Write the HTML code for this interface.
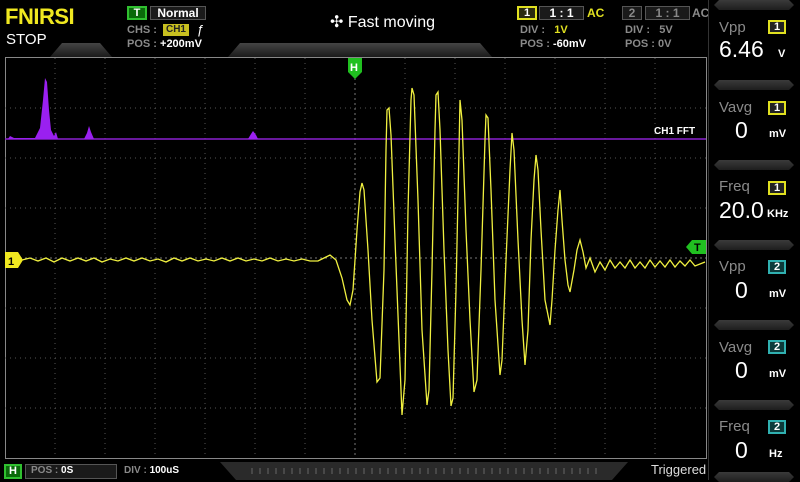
<!DOCTYPE html>
<html><head><meta charset="utf-8"><style>
*{margin:0;padding:0;box-sizing:border-box}
body{width:800px;height:480px;background:#000;overflow:hidden;position:relative;font-family:"Liberation Sans",sans-serif;color:#fff}
.a{position:absolute;white-space:nowrap}
.g{color:#8a8a8a}
.box{position:absolute;border:1px solid #555;background:#1a1a1a;color:#fff;font-weight:bold;font-size:12px;text-align:center;line-height:12px}
.tab{position:absolute;left:714px;width:80px;height:10px;background:linear-gradient(#3a3a3a,#1e1e1e);clip-path:polygon(5px 0,75px 0,80px 5px,75px 10px,5px 10px,0 5px)}
.lbl{position:absolute;left:719px;font-size:15px;color:#8a8a8a}
.val{position:absolute;font-size:23px;color:#fff}
.unit{position:absolute;font-size:11px;font-weight:bold;color:#fff}
.c1{position:absolute;left:768px;width:18px;height:14px;border:2px solid #e0e020;background:#222;color:#fff;font-size:11px;font-weight:bold;text-align:center;line-height:11px}
.c2{position:absolute;left:768px;width:18px;height:14px;border:2px solid #30b0b0;background:#0d3a3a;color:#fff;font-size:11px;font-weight:bold;text-align:center;line-height:11px}
</style></head><body>
<div class="a" style="left:5px;top:4px;font-size:22px;font-weight:bold;color:#f0e820;letter-spacing:-0.5px">FNIRSI</div>
<div class="a" style="left:6px;top:31px;font-size:15px">STOP</div>
<div class="a" style="left:127px;top:6px;width:20px;height:14px;background:#0a6a0a;border:2px solid #30c030;font-size:11px;font-weight:bold;text-align:center;line-height:10px">T</div>
<div class="box" style="left:150px;top:6px;width:56px;height:14px">Normal</div>
<div class="a g" style="left:127px;top:24px;font-size:11px;font-weight:bold">CHS :</div>
<div class="a" style="left:163px;top:24px;width:26px;height:12px;background:#c8c020;color:#222;font-size:10px;font-weight:bold;text-align:center;line-height:12px">CH1</div>
<div class="a" style="left:197px;top:22px;font-size:13px">ƒ</div>
<div class="a g" style="left:127px;top:38px;font-size:11px;font-weight:bold">POS : <span style="color:#fff">+200mV</span></div>
<div class="a" style="left:330px;top:12px;font-size:16px">✣ Fast moving</div>
<div class="a" style="left:517px;top:6px;width:20px;height:14px;border:2px solid #e0e020;background:#2a2a10;font-size:11px;font-weight:bold;text-align:center;line-height:10px">1</div>
<div class="box" style="left:539px;top:6px;width:45px;height:14px">1 : 1</div>
<div class="a" style="left:587px;top:6px;font-size:12px;font-weight:bold;color:#e0e020">AC</div>
<div class="a g" style="left:520px;top:24px;font-size:11px;font-weight:bold">DIV :&nbsp;&nbsp; <span style="color:#e0e020">1V</span></div>
<div class="a g" style="left:520px;top:38px;font-size:11px;font-weight:bold">POS : <span style="color:#fff">-60mV</span></div>
<div class="box" style="left:622px;top:6px;width:20px;height:14px;color:#888">2</div>
<div class="box" style="left:645px;top:6px;width:45px;height:14px;color:#888">1 : 1</div>
<div class="a g" style="left:692px;top:6px;font-size:12px;font-weight:bold">AC</div>
<div class="a g" style="left:625px;top:24px;font-size:11px;font-weight:bold">DIV :&nbsp;&nbsp; 5V</div>
<div class="a g" style="left:625px;top:38px;font-size:11px;font-weight:bold">POS : 0V</div>
<div class="a" style="left:50px;top:43px;width:62px;height:14px;background:linear-gradient(#444,#1a1a1a);clip-path:polygon(12px 0,50px 0,62px 14px,0 14px)"></div>
<div class="a" style="left:228px;top:43px;width:264px;height:14px;background:linear-gradient(#444,#1a1a1a);clip-path:polygon(12px 0,252px 0,264px 14px,0 14px)"></div>
<svg class="a" style="left:0;top:0" width="800" height="480">
<rect x="5.5" y="57.5" width="701" height="401" fill="none" stroke="#888" stroke-width="1"/>
<g stroke="#555" stroke-width="1" stroke-dasharray="1,4">
<line x1="55" y1="58" x2="55" y2="458"/><line x1="105" y1="58" x2="105" y2="458"/><line x1="155" y1="58" x2="155" y2="458"/><line x1="205" y1="58" x2="205" y2="458"/><line x1="255" y1="58" x2="255" y2="458"/><line x1="305" y1="58" x2="305" y2="458"/><line x1="405" y1="58" x2="405" y2="458"/><line x1="455" y1="58" x2="455" y2="458"/><line x1="505" y1="58" x2="505" y2="458"/><line x1="555" y1="58" x2="555" y2="458"/><line x1="605" y1="58" x2="605" y2="458"/><line x1="655" y1="58" x2="655" y2="458"/>
<line x1="5" y1="108" x2="706" y2="108"/><line x1="5" y1="158" x2="706" y2="158"/><line x1="5" y1="208" x2="706" y2="208"/><line x1="5" y1="308" x2="706" y2="308"/><line x1="5" y1="358" x2="706" y2="358"/><line x1="5" y1="408" x2="706" y2="408"/>
</g>
<g stroke="#777" stroke-dasharray="2,3"><line x1="355" y1="58" x2="355" y2="458"/><line x1="5" y1="258" x2="706" y2="258"/></g>
<line x1="5" y1="139" x2="706" y2="139" stroke="#8a20d0" stroke-width="1.5"/>
<path d="M8,139 L10,136 L14,138 L35,138 L40,128 L43,100 L45,78 L47,82 L49,110 L51,130 L54,136 L56,132 L58,139 L84,139 L87,133 L89,126 L91,132 L94,139 L248,139 L251,134 L253,131 L256,135 L258,139 Z" fill="#9a20f0"/>
<text x="654" y="134" fill="#fff" font-size="10" font-weight="bold" font-family="Liberation Sans">CH1 FFT</text>
<polyline fill="none" stroke="#f0f040" stroke-width="1.3" points="22,260 30,258 38,261 46,258 54,262 62,258 70,261 78,258 86,261 94,258 102,262 110,259 118,261 126,258 134,261 142,258 150,261 158,259 166,262 174,258 182,261 190,258 198,261 206,259 214,261 222,258 230,261 238,258 246,261 254,259 262,261 270,258 278,261 286,259 294,261 302,259 310,261 318,261 324,258 330,255 336,260 342,278 347,300 350,305 353,290 357,230 360,192 362,183 364,190 368,250 372,320 377,382 380,378 384,270 386,150 387,110 389,108 391,135 395,240 399,340 402,415 405,380 408,210 411,100 412,88 414,95 418,200 422,330 427,405 429,390 432,270 435,130 436,95 438,92 440,130 444,250 448,350 451,406 453,398 456,290 459,150 460,100 462,120 466,230 470,320 474,392 477,380 481,270 485,140 486,115 488,118 491,190 495,300 500,375 502,360 506,260 510,170 512,133 514,150 518,240 522,320 525,365 528,330 531,240 534,180 536,155 538,170 541,230 545,300 550,325 552,300 555,250 558,210 560,190 562,220 565,260 568,285 570,292 574,270 577,250 580,240 583,252 586,268 590,258 595,272 600,262 605,270 610,260 615,268 620,262 625,268 630,260 635,268 640,262 645,268 650,260 655,267 660,261 665,267 670,260 675,267 680,261 685,266 690,260 695,266 705,262"/>
<path d="M5,252 H18 L23,260 L18,268 H5 Z" fill="#f0e820"/>
<text x="8" y="265" font-size="11" font-weight="bold" fill="#000" font-family="Liberation Sans">1</text>
<path d="M348,58 H362 V72 L355,79 L348,72 Z" fill="#20c020"/>
<text x="350" y="71" font-size="11" font-weight="bold" fill="#fff" font-family="Liberation Sans">H</text>
<path d="M706,240 H692 L686,247 L692,254 H706 Z" fill="#20c020"/>
<text x="694" y="251" font-size="11" font-weight="bold" fill="#000" font-family="Liberation Sans">T</text>
<path d="M220,462 H628 L612,480 H236 Z" fill="#2a2a2a"/>
<g stroke="#666" stroke-width="1"><path d="M252,468 v6 M260,468 v6 M268,468 v6 M276,468 v6 M284,468 v6 M292,468 v6 M300,468 v6 M308,468 v6 M316,468 v6 M324,468 v6 M332,468 v6 M340,468 v6 M348,468 v6 M356,468 v6 M364,468 v6 M372,468 v6 M380,468 v6 M388,468 v6 M396,468 v6 M404,468 v6 M412,468 v6 M420,468 v6 M428,468 v6 M436,468 v6 M444,468 v6 M452,468 v6 M460,468 v6 M468,468 v6 M476,468 v6 M484,468 v6 M492,468 v6 M500,468 v6 M508,468 v6 M516,468 v6 M524,468 v6 M532,468 v6 M540,468 v6 M548,468 v6 M556,468 v6 M564,468 v6 M572,468 v6 M580,468 v6 M588,468 v6 M596,468 v6"/></g>
</svg>
<div class="a" style="left:4px;top:464px;width:18px;height:15px;background:#0a6a0a;border:2px solid #30c030;font-size:11px;font-weight:bold;text-align:center;line-height:11px">H</div>
<div class="box" style="left:25px;top:464px;width:92px;height:15px;text-align:left;padding-left:5px;color:#888;font-size:10px">POS : <span style="color:#fff">0S</span></div>
<div class="a g" style="left:124px;top:465px;font-size:10px;font-weight:bold">DIV : <span style="color:#fff">100uS</span></div>
<div class="a" style="left:651px;top:462px;font-size:13px;color:#ddd">Triggered</div>
<div class="a" style="left:708px;top:0;width:1px;height:480px;background:#333"></div>
<div class="tab" style="top:0"></div>
<div class="tab" style="top:80px"></div>
<div class="tab" style="top:160px"></div>
<div class="tab" style="top:240px"></div>
<div class="tab" style="top:320px"></div>
<div class="tab" style="top:400px"></div>
<div class="tab" style="top:472px"></div>
<div class="lbl" style="top:19px">Vpp</div><div class="c1" style="top:20px">1</div>
<div class="val" style="left:719px;top:36px">6.46</div><div class="unit" style="left:778px;top:48px">V</div>
<div class="lbl" style="top:99px">Vavg</div><div class="c1" style="top:101px">1</div>
<div class="val" style="left:735px;top:117px">0</div><div class="unit" style="left:769px;top:128px">mV</div>
<div class="lbl" style="top:178px">Freq</div><div class="c1" style="top:181px">1</div>
<div class="val" style="left:719px;top:197px">20.0</div><div class="unit" style="left:767px;top:208px">KHz</div>
<div class="lbl" style="top:258px">Vpp</div><div class="c2" style="top:260px">2</div>
<div class="val" style="left:735px;top:277px">0</div><div class="unit" style="left:769px;top:288px">mV</div>
<div class="lbl" style="top:339px">Vavg</div><div class="c2" style="top:340px">2</div>
<div class="val" style="left:735px;top:357px">0</div><div class="unit" style="left:769px;top:368px">mV</div>
<div class="lbl" style="top:418px">Freq</div><div class="c2" style="top:420px">2</div>
<div class="val" style="left:735px;top:437px">0</div><div class="unit" style="left:769px;top:448px">Hz</div>
</body></html>
